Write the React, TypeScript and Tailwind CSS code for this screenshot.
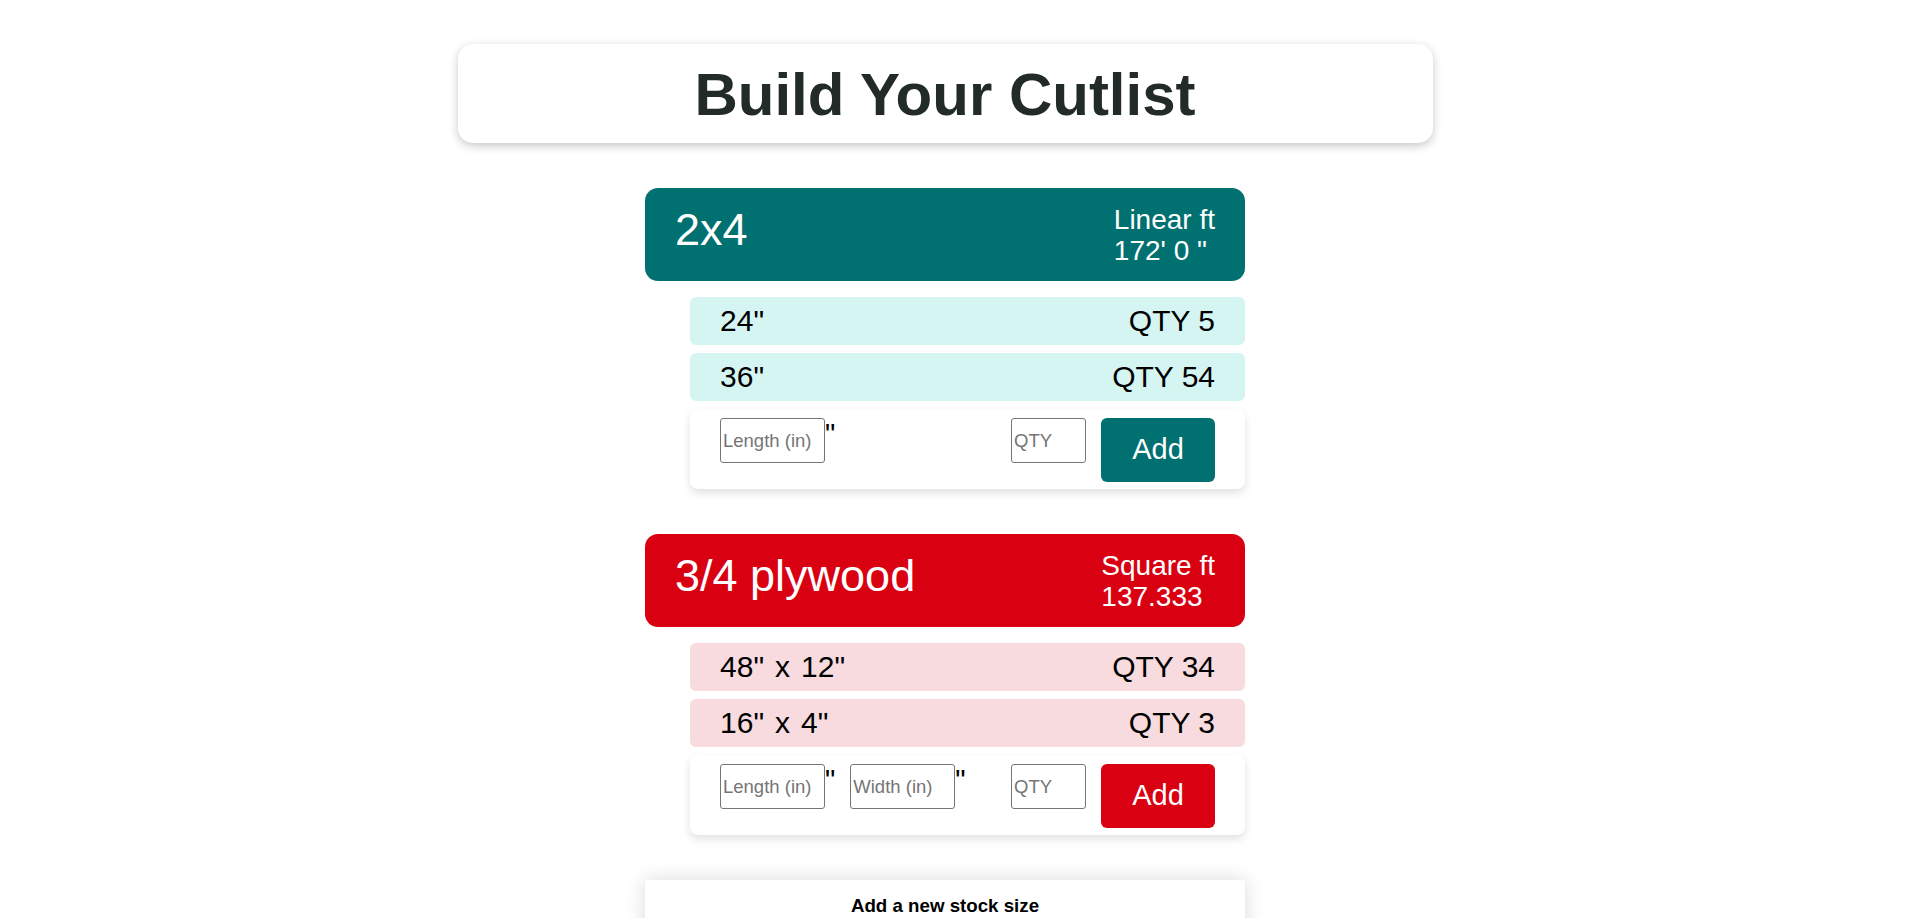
import React from 'react'

type Cut = { length: number; width?: number; qty: number }

type Stock = {
  name: string
  kind: 'linear' | 'square'
  total: string
  cuts: Cut[]
}

const stocks: Stock[] = [
  {
    name: '2x4',
    kind: 'linear',
    total: `172' 0 "`,
    cuts: [
      { length: 24, qty: 5 },
      { length: 36, qty: 54 },
    ],
  },
  {
    name: '3/4 plywood',
    kind: 'square',
    total: '137.333',
    cuts: [
      { length: 48, width: 12, qty: 34 },
      { length: 16, width: 4, qty: 3 },
    ],
  },
]

const inputCls =
  'h-[45px] rounded-[3px] border border-[#767676] bg-white px-[2px] text-[18.5px] text-black placeholder:text-[#757575] focus:outline-none'

const StockCard: React.FC<{ stock: Stock }> = ({ stock }) => {
  const linear = stock.kind === 'linear'
  const headBg = linear ? 'bg-[#007070]' : 'bg-[#d90011]'
  const rowBg = linear ? 'bg-[#d5f5f3]' : 'bg-[#f7dbde]'
  const btnBg = linear ? 'bg-[#007070]' : 'bg-[#d90011]'

  return (
    <section className="flex w-[600px] flex-col">
      <div className={`flex h-[93px] items-start justify-between rounded-[13px] px-[30px] pt-[16px] text-white ${headBg}`}>
        <h2 className="text-[45px] leading-[1.15]">{stock.name}</h2>
        <div className="text-[28px] leading-[31px]">
          <div>{linear ? 'Linear ft' : 'Square ft'}</div>
          <div>{stock.total}</div>
        </div>
      </div>

      <div className="ml-[45px] mt-[16px] flex flex-col gap-[8px]">
        {stock.cuts.map((c, i) => (
          <div
            key={i}
            className={`flex h-[48px] items-center justify-between rounded-[6px] px-[30px] text-[30px] leading-[1.15] text-black ${rowBg}`}
          >
            {c.width ? (
              <span className="flex">
                <span>{c.length}"</span>
                <span className="mx-[11px]">x</span>
                <span>{c.width}"</span>
              </span>
            ) : (
              <span>{c.length}"</span>
            )}
            <span>QTY {c.qty}</span>
          </div>
        ))}

        <form
          className="flex h-[80px] items-start justify-between rounded-[8px] bg-white px-[30px] pt-[9px] shadow-[0_4px_8px_rgba(0,0,0,0.12)]"
          onSubmit={(e) => e.preventDefault()}
        >
          <div className="flex items-start gap-[15px]">
            <div className="flex items-start">
              <input type="text" placeholder="Length (in)" className={`${inputCls} w-[105px]`} />
              <span className="text-[29px] leading-[1.15]">"</span>
            </div>
            {!linear && (
              <div className="flex items-start">
                <input type="text" placeholder="Width (in)" className={`${inputCls} w-[105px]`} />
                <span className="text-[29px] leading-[1.15]">"</span>
              </div>
            )}
          </div>
          <div className="flex items-start gap-[15px]">
            <input type="text" placeholder="QTY" className={`${inputCls} w-[75px]`} />
            <button
              type="submit"
              className={`h-[64px] w-[114px] rounded-[6px] text-[29px] text-white ${btnBg}`}
            >
              Add
            </button>
          </div>
        </form>
      </div>
    </section>
  )
}

export default function App() {
  return (
    <div className="h-screen overflow-y-scroll bg-white font-['Liberation_Sans',Arial,sans-serif] text-black [&::-webkit-scrollbar]:w-[17px] [&::-webkit-scrollbar-track]:bg-[#f1f1f1] [&::-webkit-scrollbar-thumb]:border-x-[2px] [&::-webkit-scrollbar-thumb]:border-solid [&::-webkit-scrollbar-thumb]:border-[#f1f1f1] [&::-webkit-scrollbar-thumb]:bg-[#c1c1c1] [&::-webkit-scrollbar-button]:h-[17px] [&::-webkit-scrollbar-button]:bg-[#f1f1f1]">
      <div className="flex w-[1890px] flex-col items-center pb-[34px] pt-[44px]">
        <header className="flex h-[99px] w-[975px] justify-center rounded-[15px] bg-white pt-[16px] shadow-[0_3px_10px_rgba(0,0,0,0.22)]">
          <h1 className="text-[60px] font-bold leading-[1.15] text-[#222b28]">Build Your Cutlist</h1>
        </header>

        <div className="mt-[45px] flex flex-col gap-[45px]">
          {stocks.map((s) => (
            <StockCard key={s.name} stock={s} />
          ))}

          <div className="flex w-[600px] flex-col items-center gap-[16px] rounded-[2px] bg-white px-[30px] pb-[30px] pt-[15px] shadow-[0_0_20px_rgba(0,0,0,0.15)]">
            <h3 className="text-[18.72px] font-bold leading-[1.15]">Add a new stock size</h3>
            <input type="text" placeholder="Stock name" className={`${inputCls} w-[300px]`} />
            <div className="flex items-center gap-[20px] text-[18px]">
              <label className="flex items-center gap-[6px]">
                <input type="radio" name="kind" defaultChecked /> Linear ft
              </label>
              <label className="flex items-center gap-[6px]">
                <input type="radio" name="kind" /> Square ft
              </label>
            </div>
            <div className="flex items-center gap-[12px]">
              <span className="text-[18px]">Color</span>
              <input type="color" defaultValue="#007070" className="h-[32px] w-[60px]" />
            </div>
            <button type="button" className="h-[52px] w-[180px] rounded-[6px] bg-[#222b28] text-[22px] text-white">
              Add stock
            </button>
          </div>
        </div>
      </div>
    </div>
  )
}
